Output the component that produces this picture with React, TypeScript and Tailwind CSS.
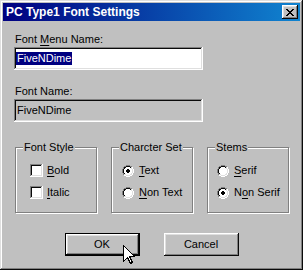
import React from "react";

type Px = { x: number; y: number; c: string };

const range = (a: number, b: number) => Array.from({ length: b - a + 1 }, (_, i) => a + i);

// classic 12x12 radio, drawn pixel by pixel
function radioPixels(checked: boolean): Px[] {
  const out: Px[] = [];
  const outer: [number, number[]][] = [
    [0, range(4, 7)], [1, [2, 3, 8, 9]], [2, [1, 10]], [3, [1, 10]],
    [4, [0, 11]], [5, [0, 11]], [6, [0, 11]], [7, [0, 11]],
    [8, [1, 10]], [9, [1, 10]], [10, [2, 3, 8, 9]], [11, range(4, 7)],
  ];
  const inner: [number, number[]][] = [
    [1, range(4, 7)], [2, [2, 3, 8, 9]], [3, [2, 9]],
    [4, [1, 10]], [5, [1, 10]], [6, [1, 10]], [7, [1, 10]],
    [8, [2, 9]], [9, [2, 3, 8, 9]], [10, range(4, 7)],
  ];
  const fill: [number, number[]][] = [
    [2, range(4, 7)], [3, range(3, 8)], [4, range(2, 9)], [5, range(2, 9)],
    [6, range(2, 9)], [7, range(2, 9)], [8, range(3, 8)], [9, range(4, 7)],
  ];
  outer.forEach(([y, xs]) => xs.forEach((x) => out.push({ x, y, c: x + y < 11 ? "#808080" : "#ffffff" })));
  inner.forEach(([y, xs]) => xs.forEach((x) => out.push({ x, y, c: x + y < 11 ? "#0a0a0a" : "#dfdfdf" })));
  fill.forEach(([y, xs]) => xs.forEach((x) => out.push({ x, y, c: "#ffffff" })));
  if (checked) {
    const dot: [number, number[]][] = [[4, [5, 6]], [5, range(4, 7)], [6, range(4, 7)], [7, [5, 6]]];
    dot.forEach(([y, xs]) => xs.forEach((x) => out.push({ x, y, c: "#000000" })));
  }
  return out;
}

function Radio({ checked = false }: { checked?: boolean }) {
  return (
    <svg width="12" height="12" viewBox="0 0 12 12" shapeRendering="crispEdges" className="shrink-0">
      {radioPixels(checked).map((p, i) => (
        <rect key={i} x={p.x} y={p.y} width="1" height="1" fill={p.c} />
      ))}
    </svg>
  );
}

function Checkbox() {
  return (
    <div className="h-[13px] w-[13px] shrink-0 bg-white shadow-[inset_-1px_-1px_#ffffff,inset_1px_1px_#808080,inset_-2px_-2px_#dfdfdf,inset_2px_2px_#0a0a0a]" />
  );
}

function CloseX() {
  const rows = ["xx....xx", ".xx..xx.", "..xxxx..", "...xx...", "..xxxx..", ".xx..xx.", "xx....xx"];
  return (
    <svg width="8" height="7" viewBox="0 0 8 7" shapeRendering="crispEdges">
      {rows.flatMap((r, y) =>
        r.split("").map((ch, x) => (ch === "x" ? <rect key={`${x}-${y}`} x={x} y={y} width="1" height="1" fill="#000" /> : null))
      )}
    </svg>
  );
}

function Cursor() {
  return (
    <svg width="12" height="19" viewBox="0 0 12 19" shapeRendering="crispEdges" className="absolute left-[123px] top-[245px]">
      <path d="M0.5 0.5 V16.5 L4.5 12.5 L7.5 18.5 L9.5 17.5 L6.5 11.5 H11.5 Z" fill="#fff" stroke="#000" strokeWidth="1" />
    </svg>
  );
}

function Group({ title, pl, children }: { title: string; pl: string; children: React.ReactNode }) {
  return (
    <fieldset className="h-[72px] w-[82px] shrink-0 border border-[#808080] shadow-[1px_1px_#ffffff,inset_1px_1px_#ffffff]">
      <legend className="ml-[7px] whitespace-nowrap bg-[#c0c0c0] px-[1px] leading-[13px]">{title}</legend>
      <div className={`mt-[10px] flex flex-col gap-[9px] ${pl}`}>{children}</div>
    </fieldset>
  );
}

export default function App() {
  const raised =
    "shadow-[inset_-1px_-1px_#0a0a0a,inset_1px_1px_#ffffff,inset_-2px_-2px_#808080,inset_2px_2px_#dfdfdf]";
  const sunken =
    "shadow-[inset_-1px_-1px_#ffffff,inset_1px_1px_#808080,inset_-2px_-2px_#dfdfdf,inset_2px_2px_#0a0a0a]";

  return (
    <div className="relative h-[270px] w-[303px] bg-[#c0c0c0] p-[3px] font-['Liberation_Sans',Arial,sans-serif] text-[11px] text-black shadow-[inset_-1px_-1px_#0a0a0a,inset_1px_1px_#dfdfdf,inset_-2px_-2px_#808080,inset_2px_2px_#ffffff]">
      {/* Title bar */}
      <div className="flex h-[18px] items-center justify-between bg-[linear-gradient(90deg,#000080,#1084d0)] pl-[3px] pr-[2px]">
        <span className="text-[12px] font-bold leading-[18px] text-white">PC Type1 Font Settings</span>
        <button className={`flex h-[14px] w-[16px] items-center justify-center bg-[#c0c0c0] ${raised}`}>
          <CloseX />
        </button>
      </div>

      <div className="px-[11px]">
        <div className="mt-[12px] pl-[1px] leading-[13px]">
          Font <u className="underline-offset-[2px]">M</u>enu Name:
        </div>
        <div className={`mt-[1px] flex h-[23px] w-[189px] items-center bg-white px-[2px] ${sunken}`}>
          <span className="bg-[#000080] px-[1px] leading-[13px] text-white">FiveNDime</span>
        </div>

        <div className="mt-[15px] pl-[1px] leading-[13px]">Font Name:</div>
        <div className={`mt-[1px] flex h-[23px] w-[189px] items-center bg-[#c0c0c0] px-[3px] ${sunken}`}>
          <span className="leading-[13px]">FiveNDime</span>
        </div>

        <div className="mt-[19px] flex gap-[14px] pl-[1px]">
          <Group title="Font Style" pl="pl-[14px]">
            <label className="flex items-center gap-[4px] leading-[13px]">
              <Checkbox />
              <span>
                <u className="underline-offset-[2px]">B</u>old
              </span>
            </label>
            <label className="flex items-center gap-[4px] leading-[13px]">
              <Checkbox />
              <span>
                <u className="underline-offset-[2px]">I</u>talic
              </span>
            </label>
          </Group>
          <Group title="Charcter Set" pl="pl-[10px]">
            <label className="flex items-center gap-[5px] leading-[13px]">
              <Radio checked />
              <span>
                <u className="underline-offset-[2px]">T</u>ext
              </span>
            </label>
            <label className="flex items-center gap-[5px] leading-[13px]">
              <Radio />
              <span>
                <u className="underline-offset-[2px]">N</u>on Text
              </span>
            </label>
          </Group>
          <Group title="Stems" pl="pl-[9px]">
            <label className="flex items-center gap-[5px] leading-[13px]">
              <Radio />
              <span>
                <u className="underline-offset-[2px]">S</u>erif
              </span>
            </label>
            <label className="flex items-center gap-[5px] leading-[13px]">
              <Radio checked />
              <span>
                N<u className="underline-offset-[2px]">o</u>n Serif
              </span>
            </label>
          </Group>
        </div>
      </div>

      <div className="mt-[20px] flex justify-center gap-[24px]">
        <button className={`h-[23px] w-[75px] border border-black bg-[#c0c0c0] ${raised}`}>OK</button>
        <button className={`h-[23px] w-[75px] bg-[#c0c0c0] ${raised}`}>Cancel</button>
      </div>

      <Cursor />
    </div>
  );
}
